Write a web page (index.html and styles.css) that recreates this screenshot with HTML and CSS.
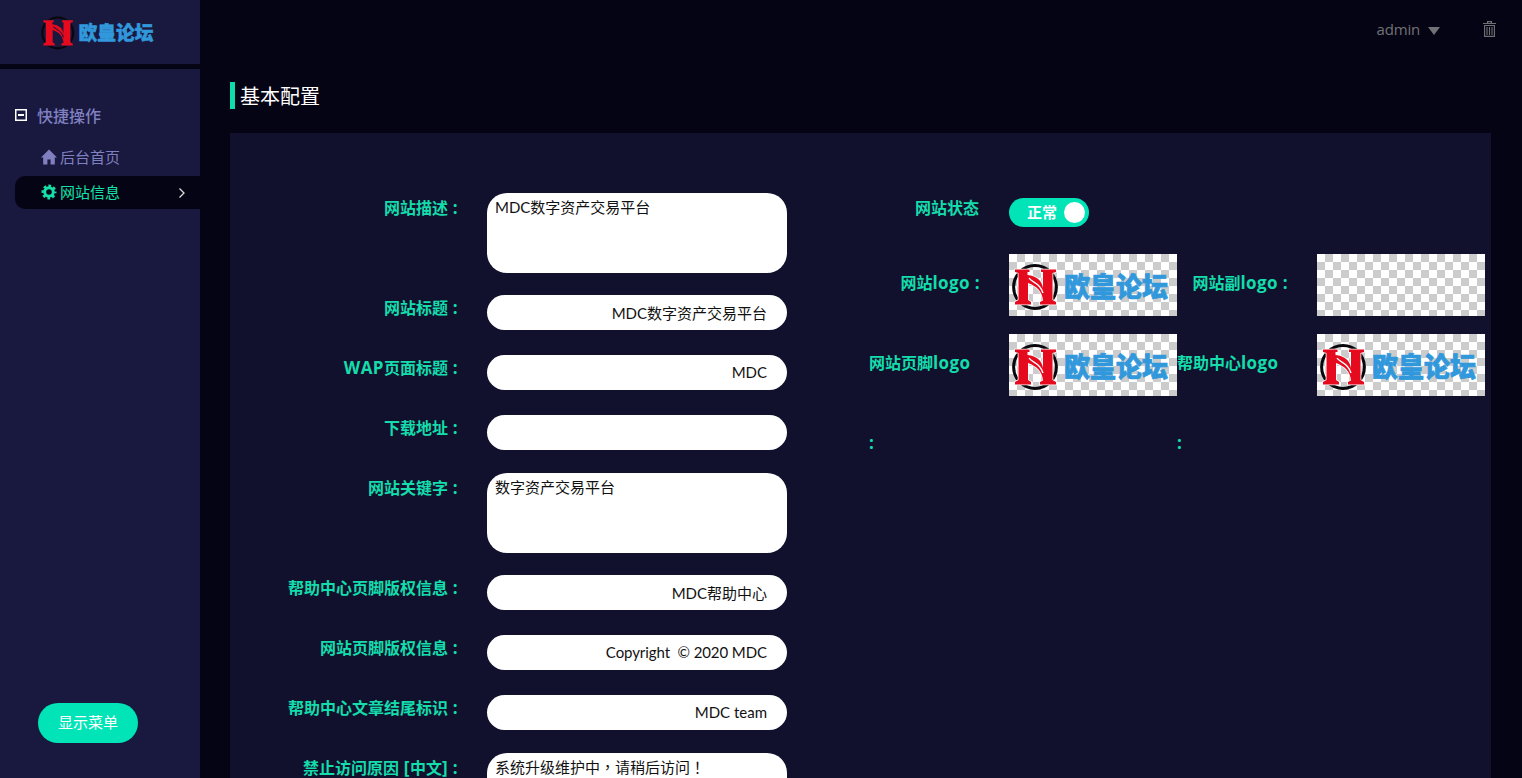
FILE: index.html
```html
<!DOCTYPE html>
<html lang="zh-CN">
<head>
<meta charset="utf-8">
<title>基本配置</title>
<link rel="stylesheet" href="styles.css">
</head>
<body>
<svg class="defs" aria-hidden="true">
  <symbol id="logo" viewBox="0 0 168 62" overflow="visible">
    <circle cx="26" cy="33" r="21.4" fill="none" stroke="#08080c" stroke-width="3"/>
    <path class="halo" d="M6 15.500H20.500V18H18.500V21C28 22 33 27 34 34V18H32V15.500H47V18L43.500 19V46L47 48V50.500H31V48L34 46.500C33 37 28 32.500 19 29V46L22 48V50.500H6V48L9.500 46V19L6 18Z"/>
    <path fill="#e60a1e" d="M6 15.500H20.500V18H18.500V21C28 22 33 27 34 34V18H32V15.500H47V18L43.500 19V46L47 48V50.500H31V48L34 46.500C33 37 28 32.500 19 29V46L22 48V50.500H6V48L9.500 46V19L6 18Z"/>
    <path class="halo-line" d="M20 24C23 29 31 28 34 39"/>
    <text class="logo-text" x="55" y="43" textLength="104" lengthAdjust="spacingAndGlyphs">欧皇论坛</text>
  </symbol>
</svg>
<div class="app">
  <aside class="sidebar">
    <div class="brand"><svg class="brand-logo dark" viewBox="0 0 168 62"><use href="#logo"/></svg></div>
    <nav class="menu">
      <div class="menu-title">
        <svg width="12" height="12" viewBox="0 0 12 12"><rect x=".75" y=".75" width="10.500" height="10.500" fill="none" stroke="#fff" stroke-width="1.500"/><path d="M3 6h6" stroke="#fff" stroke-width="2"/></svg>
        <span>快捷操作</span>
      </div>
      <a class="item">
        <svg width="18" height="16" viewBox="0 0 18 16"><path fill="currentColor" d="M9 .5 17 8.500H14.800V15.500H10.600V10.500H7.400V15.500H3.200V8.500H1Z"/></svg>
        <span>后台首页</span>
      </a>
      <a class="item active">
        <svg width="18" height="16" viewBox="-9 -8 18 16"><g fill="none" stroke="currentColor"><circle r="4.300" stroke-width="3"/><circle r="6.300" stroke-width="2.400" stroke-dasharray="2.700 2.248" stroke-dashoffset="1.350"/></g></svg>
        <span>网站信息</span>
        <svg class="arrow" width="8" height="12" viewBox="0 0 8 12"><path d="M1.500 1.500 6 6 1.500 10.500" fill="none" stroke="#ddd" stroke-width="1.300"/></svg>
      </a>
    </nav>
    <button class="show-menu">显示菜单</button>
  </aside>
  <main class="main">
    <header class="topbar">
      <span class="user">admin</span>
      <svg class="caret" width="12" height="8" viewBox="0 0 12 8"><path d="M0 0H12L6 8Z" fill="#727276"/></svg>
      <svg class="trash" width="13" height="16" viewBox="0 0 13 16"><path d="M0 2.500H13M4.500 2V.6H8.500V2M1.600 4.500H11.400V15.400H1.600ZM4 6V14M6.500 6V14M9 6V14" fill="none" stroke="#727276" stroke-width="1.100"/></svg>
    </header>
    <h1 class="title">基本配置</h1>
    <section class="panel">
      <div class="fields">
        <div class="row tall"><label>网站描述<b>&nbsp;:</b></label><div class="box area">MDC数字资产交易平台</div></div>
        <div class="row"><label>网站标题<b>&nbsp;:</b></label><div class="box cjk">MDC数字资产交易平台</div></div>
        <div class="row"><label><b>WAP</b>页面标题<b>&nbsp;:</b></label><div class="box">MDC</div></div>
        <div class="row"><label>下载地址<b>&nbsp;:</b></label><div class="box"></div></div>
        <div class="row tall"><label>网站关键字<b>&nbsp;:</b></label><div class="box area">数字资产交易平台</div></div>
        <div class="row"><label>帮助中心页脚版权信息<b>&nbsp;:</b></label><div class="box cjk">MDC帮助中心</div></div>
        <div class="row"><label>网站页脚版权信息<b>&nbsp;:</b></label><div class="box copyright">Copyright &nbsp;© 2020 MDC</div></div>
        <div class="row"><label>帮助中心文章结尾标识<b>&nbsp;:</b></label><div class="box">MDC team</div></div>
        <div class="row tall"><label>禁止访问原因<b>&nbsp;[</b>中文<b>]&nbsp;:</b></label><div class="box area">系统升级维护中<span class="mark" lang="zh-TW">，</span>请稍后访问<span class="mark" lang="zh-TW">！</span></div></div>
      </div>
      <div class="site">
        <div class="status"><label>网站状态</label><div class="switch"><span>正常</span><i></i></div></div>
        <div class="logos">
          <label>网站<b>logo&nbsp;:</b></label>
          <div class="picture"><svg viewBox="0 0 168 62"><use href="#logo"/></svg></div>
          <label>网站副<b>logo&nbsp;:</b></label>
          <div class="picture"></div>
          <label class="wrapped"><span>网站页脚<b>logo</b></span><span><b>:</b></span></label>
          <div class="picture"><svg viewBox="0 0 168 62"><use href="#logo"/></svg></div>
          <label class="wrapped"><span>帮助中心<b>logo</b></span><span><b>:</b></span></label>
          <div class="picture"><svg viewBox="0 0 168 62"><use href="#logo"/></svg></div>
        </div>
      </div>
    </section>
  </main>
</div>
</body>
</html>
```
FILE: styles.css
```css
* { box-sizing: border-box; }
body {
  margin: 0;
  background: #050414;
  color: #fff;
  font: 15px "Open Sans", "Noto Sans CJK SC", sans-serif;
  overflow: hidden;
}
.defs { position: absolute; width: 0; height: 0; }
.app { display: flex; height: 778px; }

.dark { --halo: #19183e; }
.halo { fill: var(--halo, #fff); stroke: var(--halo, #fff); stroke-width: 1.6; }
.halo-line { fill: none; stroke: var(--halo, #fff); stroke-width: 1.4; }
.logo-text {
  font: 900 27px "Noto Sans CJK SC", sans-serif;
  fill: #3298dc;
  stroke: #3298dc;
  stroke-width: .7;
}

.sidebar {
  display: flex;
  flex-direction: column;
  width: 200px;
  background: #19183e;
}
.brand {
  height: 69px;
  border-bottom: 5px solid #050414;
  padding: 9px 0 0 39px;
}
.brand-logo { display: block; width: 121px; height: 45px; overflow: visible; }
.menu { flex: 1; padding: 31px 0 0 15px; }
.menu-title {
  display: flex;
  align-items: center;
  gap: 10px;
  height: 32px;
  margin-bottom: 9px;
  color: #8080c0;
  font-size: 16px;
  font-weight: 500;
}
.menu-title svg { margin-top: -2px; }
.menu-title span { padding-bottom: 2px; }
.item {
  display: flex;
  align-items: center;
  height: 33px;
  padding: 0 14px 2px 25px;
  color: #8080c0;
  border-radius: 10px 0 0 10px;
}
.item span { margin-left: 2px; line-height: 30px; }
.item.active { margin-top: 2px; background: #050414; color: #15e0a8; }
.arrow { margin: 2px 0 0 auto; }
.show-menu {
  width: 100px;
  height: 40px;
  margin: 0 0 35px 38px;
  padding: 0 0 3px;
  border: 0;
  border-radius: 20px;
  background: #00e4b7;
  color: #fff;
  font: inherit;
}

.main { flex: 1; padding: 0 31px 0 30px; }
.topbar {
  display: flex;
  align-items: center;
  justify-content: flex-end;
  height: 60px;
  margin-right: -5px;
  color: #727276;
}
.user { padding-bottom: 2px; letter-spacing: -.2px; }
.caret { margin: 1px 43px 0 8px; }
.trash { margin-top: -2px; }
.title {
  margin: 22px 0 24px;
  padding: 2px 0 0 5px;
  border-left: 5px solid #0fdcab;
  font-size: 20px;
  font-weight: 400;
  height: 27px;
  line-height: 26px;
}
.panel {
  display: flex;
  height: 645px;
  padding-top: 60px;
  background: #11112e;
  overflow: hidden;
}
label {
  color: #14dcab;
  font-size: 16px;
  font-weight: 700;
  line-height: 30px;
  text-align: right;
  white-space: nowrap;
}
label b { font-size: 17px; font-weight: 700; letter-spacing: .4px; line-height: 1; }
.fields { width: 557px; }
.row { display: flex; gap: 29px; height: 60px; }
.row label { width: 228px; }
.row.tall { height: 100px; }
.box {
  width: 300px;
  height: 35px;
  margin-top: 2px;
  padding: 0 20px;
  border-radius: 20px;
  background: #fff;
  color: #111;
  font: 15px/35px Lato, "Noto Sans CJK SC", sans-serif;
  text-align: right;
}
.box.cjk { line-height: 37px; }
.box.copyright { letter-spacing: -.08px; }
.box.area {
  height: 80px;
  margin-top: 0;
  padding: 4px 8px;
  line-height: 21px;
  text-align: left;
}
.mark { font-family: "Noto Sans CJK TC", sans-serif; line-height: 1; }
.site { width: 704px; padding-left: 82px; }
.status { display: flex; gap: 30px; height: 50px; }
.status label { width: 110px; }
.switch {
  display: flex;
  align-items: center;
  justify-content: space-between;
  width: 80px;
  height: 29px;
  margin-top: 5px;
  padding: 0 4px 0 18px;
  border-radius: 15px;
  background: #00e4b7;
  font-size: 15px;
  font-weight: 700;
}
.switch span { padding-bottom: 2px; }
.switch i { width: 21px; height: 21px; border-radius: 50%; background: #fff; }
.logos {
  display: grid;
  grid-template-columns: 140px 168px 140px 168px;
  grid-auto-rows: 80px;
}
.logos label { padding-right: 29px; line-height: 80px; }
.logos label.wrapped { display: flex; flex-direction: column; align-items: flex-start; height: 160px; }
.picture {
  width: 168px;
  height: 62px;
  margin-top: 11px;
  background: conic-gradient(#ccc 25%, #fff 0 50%, #ccc 0 75%, #fff 0) 0 0 / 16px 16px;
}
.picture svg { display: block; }
```
